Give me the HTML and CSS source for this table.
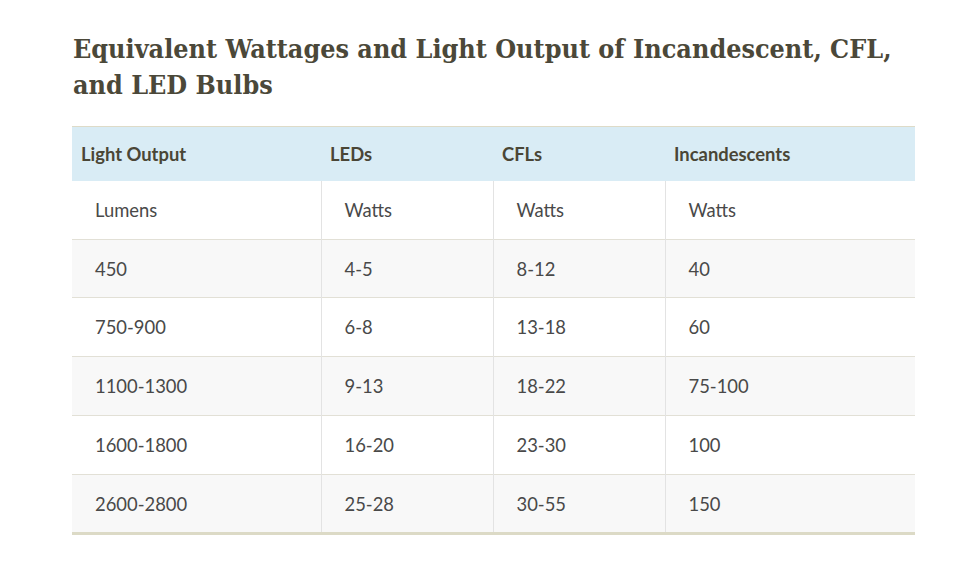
FILE: index.html
```html
<!DOCTYPE html>
<html>
<head>
<meta charset="utf-8">
<link rel="stylesheet" href="styles.css">
</head>
<body>
<main class="page">
  <h2 class="title">Equivalent Wattages and Light Output of Incandescent, CFL, and LED Bulbs</h2>
  <table class="bulbs">
    <colgroup>
      <col class="c1"><col class="c2"><col class="c3"><col class="c4">
    </colgroup>
    <thead>
      <tr><th>Light Output</th><th>LEDs</th><th>CFLs</th><th>Incandescents</th></tr>
    </thead>
    <tbody>
      <tr><td>Lumens</td><td>Watts</td><td>Watts</td><td>Watts</td></tr>
      <tr><td>450</td><td>4-5</td><td>8-12</td><td>40</td></tr>
      <tr><td>750-900</td><td>6-8</td><td>13-18</td><td>60</td></tr>
      <tr><td>1100-1300</td><td>9-13</td><td>18-22</td><td>75-100</td></tr>
      <tr><td>1600-1800</td><td>16-20</td><td>23-30</td><td>100</td></tr>
      <tr><td>2600-2800</td><td>25-28</td><td>30-55</td><td>150</td></tr>
    </tbody>
  </table>
</main>
</body>
</html>
```

FILE: styles.css
```css
html, body {
  margin: 0;
  padding: 0;
  background: #ffffff;
}
.page {
  padding: 31px 0 0 72px;
  width: 843px;
}
.title {
  margin: 0 0 23px 1px;
  font-family: "DejaVu Serif", "Liberation Serif", serif;
  font-stretch: condensed;
  font-weight: 600;
  font-size: 26.7px;
  line-height: 36px;
  color: #4b4839;
  width: 842px;
}
.bulbs {
  width: 843px;
  border-collapse: collapse;
  table-layout: fixed;
  font-family: Lato, "Open Sans", sans-serif;
  font-size: 18.4px;
  color: #494949;
  border-top: 1px solid #dedbc8;
  border-bottom: 3px solid #dcdac6;
}
.c1 { width: 249px; }
.c2 { width: 172px; }
.c3 { width: 172px; }
.c4 { width: 250px; }
.bulbs th {
  background: #d9ecf5;
  text-align: left;
  font-weight: 700;
  color: #4a4636;
  padding: 14px 9px;
  line-height: 26px;
}
.bulbs td {
  padding: 17px 23px 15px;
  line-height: 25.7px;
  border-top: 1px solid #e2e0d6;
  border-left: 1px solid #e3e3e3;
}
.bulbs td:first-child {
  border-left: none;
}
.bulbs tbody tr:first-child td {
  border-top: none;
}
.bulbs tbody tr:nth-child(even) td {
  background: #f8f8f8;
}
```
